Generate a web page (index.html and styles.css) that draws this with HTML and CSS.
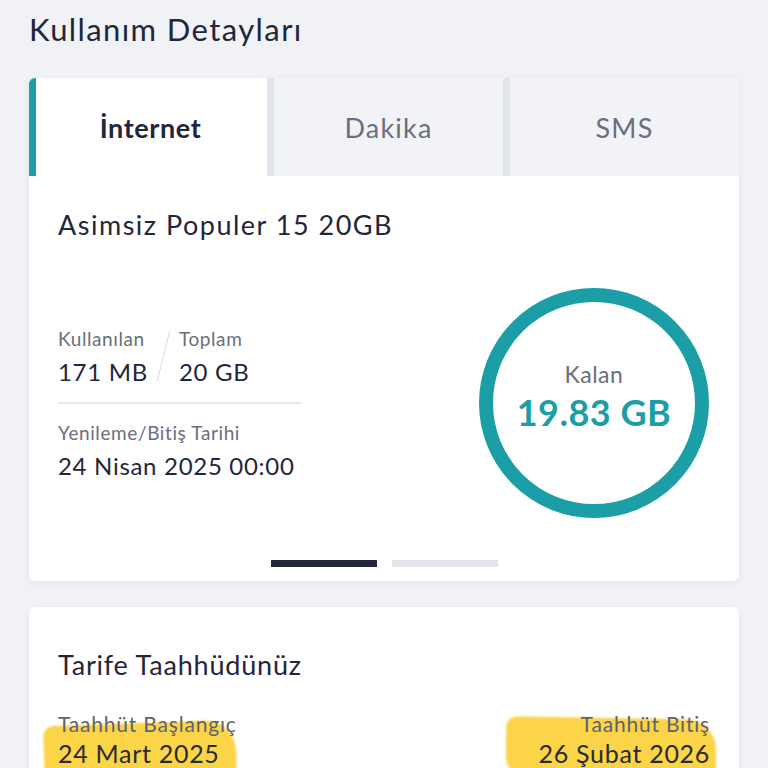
FILE: index.html
```html
<!DOCTYPE html>
<html lang="tr">
<head>
<meta charset="utf-8">
<link rel="stylesheet" href="styles.css">
</head>
<body>
<div class="page">
  <h1 class="title">Kullanım Detayları</h1>
  <div class="card usage">
    <div class="tabs">
      <div class="tab active">İnternet</div>
      <div class="tab">Dakika</div>
      <div class="tab">SMS</div>
    </div>
    <div class="body">
      <div class="plan">Asimsiz Populer 15 20GB</div>
      <div class="row">
        <div class="info">
          <div class="pair">
            <div class="col">
              <div class="label">Kullanılan</div>
              <div class="value">171 MB</div>
            </div>
            <div class="slash"></div>
            <div class="col">
              <div class="label">Toplam</div>
              <div class="value">20 GB</div>
            </div>
          </div>
          <div class="divider"></div>
          <div class="label">Yenileme/Bitiş Tarihi</div>
          <div class="value">24 Nisan 2025 00:00</div>
        </div>
        <div class="ring">
          <div class="ring-label">Kalan</div>
          <div class="ring-value">19.83 GB</div>
        </div>
      </div>
      <div class="dots">
        <span class="dot on"></span>
        <span class="dot"></span>
      </div>
    </div>
  </div>
  <div class="card commit">
    <div class="commit-title">Tarife Taahhüdünüz</div>
    <div class="dates">
      <div class="date left">
        <span class="mark mark-left"></span>
        <div class="label">Taahhüt Başlangıç</div>
        <div class="value">24 Mart 2025</div>
      </div>
      <div class="date right">
        <span class="mark mark-right"></span>
        <div class="label">Taahhüt Bitiş</div>
        <div class="value">26 Şubat 2026</div>
      </div>
    </div>
  </div>
</div>
</body>
</html>
```
FILE: styles.css
```css
* { box-sizing: border-box; }
html, body { margin: 0; padding: 0; }
body {
  background: #f0f2f6;
  font-family: "Lato", "Noto Sans", sans-serif;
  color: #23263a;
  width: 768px;
  height: 768px;
  overflow: hidden;
}
.page { padding: 8px 29px 0 29px; }
.title {
  margin: 0;
  font-size: 31px;
  font-weight: 400;
  line-height: 42px;
  color: #23263a;
  letter-spacing: 1.4px;
}
.card {
  background: #fff;
  border-radius: 6px;
  box-shadow: 0 2px 8px rgba(30, 40, 70, 0.06);
}
.usage { margin-top: 28px; overflow: hidden; }
.tabs {
  display: flex;
  gap: 7px;
  background: #e2e5eb;
  height: 98px;
}
.tab {
  flex: 1;
  background: #f2f3f6;
  display: flex;
  align-items: center;
  justify-content: center;
  font-size: 27px;
  color: #6b6e7c;
  letter-spacing: 1.2px;
}
.tab.active {
  background: #fff;
  color: #23263a;
  font-weight: 700;
  border-left: 7px solid #1b9ea6;
  padding-right: 2px;
  letter-spacing: 0.6px;
}
.body { padding: 32px 29px 14px 29px; }
.plan { font-size: 27px; line-height: 34px; color: #23263a; letter-spacing: 1.5px; }
.row {
  display: flex;
  justify-content: space-between;
  align-items: flex-start;
  margin-top: 46px;
}
.info { width: 243px; margin-top: 38px; }
.pair { display: flex; align-items: flex-start; }
.slash {
  width: 1px;
  height: 52px;
  background: #d8dae0;
  transform: rotate(14deg);
  margin: 4px 15px 0 15px;
}
.label { font-size: 19px; line-height: 26px; color: #6b6e7c; letter-spacing: 0.6px; }
.value { font-size: 24px; line-height: 32px; color: #23263a; margin-top: 4px; letter-spacing: 0.7px; }
.divider { height: 2px; background: #e6e8ec; margin: 14px 0 16px; }
.ring {
  width: 230px;
  height: 230px;
  border-radius: 50%;
  border: 14px solid #1b9ea6;
  display: flex;
  flex-direction: column;
  align-items: center;
  justify-content: center;
  margin-right: 1px;
  padding-bottom: 14px;
}
.ring-label { font-size: 23px; color: #6b6e7c; line-height: 28px; letter-spacing: 0.5px; }
.ring-value { font-size: 36px; font-weight: 700; color: #1b9ea6; line-height: 42px; margin-top: 3px; letter-spacing: 0.5px; }
.dots { display: flex; justify-content: center; gap: 15px; margin-top: 42px; }
.dot { width: 106px; height: 7px; background: #e2e4ea; }
.dot.on { background: #23263a; }
.commit { margin-top: 26px; padding: 41px 29px 20px 29px; }
.commit-title { font-size: 27px; line-height: 34px; letter-spacing: 0.8px; }
.dates { display: flex; justify-content: space-between; margin-top: 29px; }
.date { position: relative; }
.date.right { text-align: right; }
.date .label, .date .value { position: relative; }
.date .label { color: #5f6270; font-size: 21px; letter-spacing: 0.8px; }
.date .value { font-size: 25px; margin-top: 1px; line-height: 30px; color: #2a2a2a; }
.mark {
  position: absolute;
  background: rgba(250, 204, 40, 0.85);
  border-radius: 10px 30px 14px 20px;
  filter: blur(1px);
}
.mark-left { left: -14px; top: 12px; width: 192px; height: 60px; transform: rotate(-2deg); }
.mark-right { right: -6px; top: 7px; width: 210px; height: 60px; transform: rotate(1deg); }
```
